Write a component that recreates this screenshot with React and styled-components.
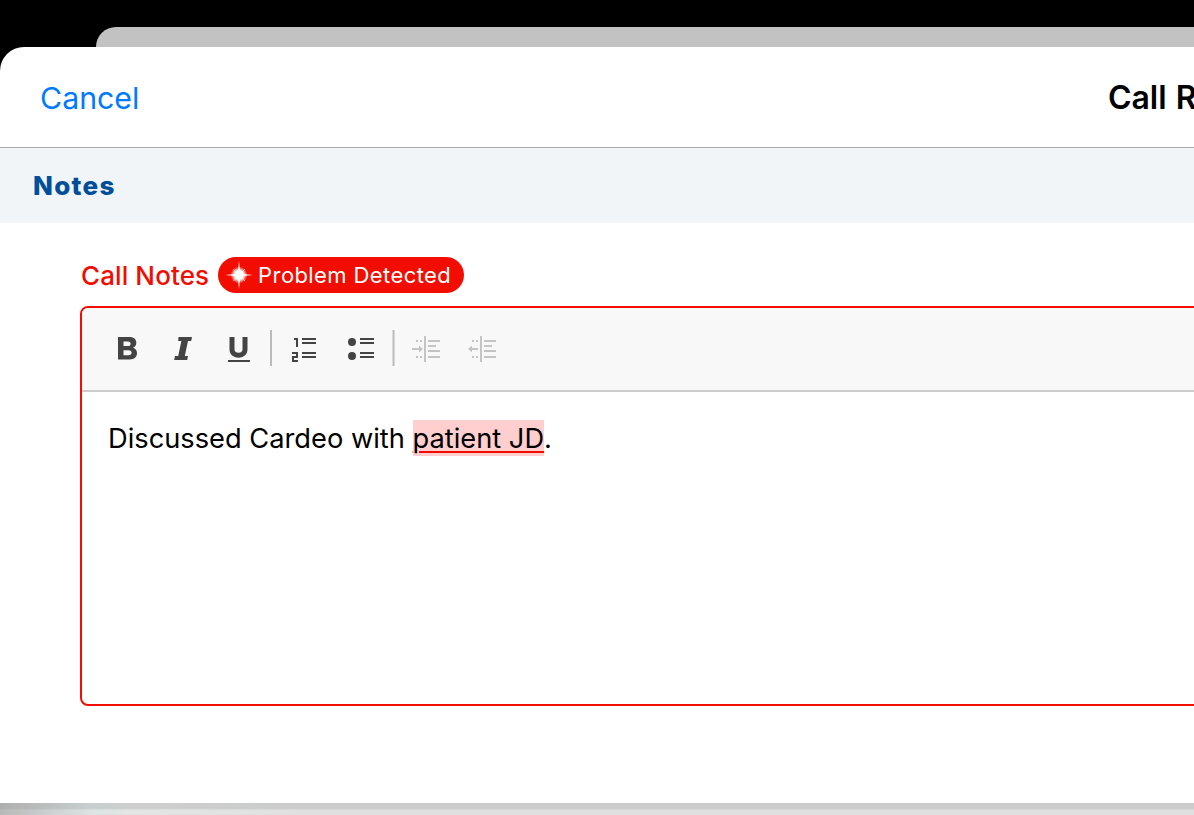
import React from "react";
import styled, { createGlobalStyle } from "styled-components";

const Global = createGlobalStyle`
  html, body { margin: 0; padding: 0; background: #000; }
  body { font-family: Inter, "Noto Sans", "Liberation Sans", sans-serif; }
`;
const Stage = styled.div`
  width: 1194px; height: 815px; overflow: hidden; background: #000;
  display: flex; flex-direction: column; padding-top: 27px; box-sizing: border-box;
`;
const BackCard = styled.div`
  flex: 0 0 20px; margin-left: 96px; background: #c2c2c2; border-radius: 20px 0 0 0;
`;
const Sheet = styled.div`
  flex: 0 0 756px; width: 2386px; background: #fff; border-radius: 24px 0 0 0;
  display: flex; flex-direction: column; overflow: hidden;
`;
const BottomStrip = styled.div`
  flex: 1;
  background:
    linear-gradient(180deg, rgba(150,150,150,.28) 0, rgba(150,150,150,.28) 45%, rgba(150,150,150,0) 60%),
    linear-gradient(90deg, #b8b8b8 0, #dbe4e3 90px, #e2e5e4 130px, #e0e0e0 300px, #e0e0e0 100%);
`;
const Header = styled.header`
  height: 101px; box-sizing: border-box; border-bottom: 1px solid #ababab; padding: 1px 40px 0 41px;
  display: grid; grid-template-columns: 1fr auto 1fr; align-items: center;
`;
const Cancel = styled.button`
  justify-self: start; border: 0; background: none; padding: 0; color: #007aff;
  font: 400 30.300px Inter, sans-serif; margin-left: -1px;
`;
const Title = styled.h1`
  margin: 0 0 1px; font: 600 32px Inter, sans-serif; color: #000; white-space: nowrap; word-spacing: 1px;
`;
const SectionBar = styled.div`
  height: 75px; background: #f1f5f8; display: flex; align-items: center; padding-left: 33px;
  color: #004f98; font-size: 26px; font-weight: 800; letter-spacing: 1.300px; box-sizing: border-box;
`;
const Body = styled.div`
  padding: 34px 0 0 80px; display: flex; flex-direction: column;
`;
const LabelRow = styled.div`
  height: 36px; display: flex; align-items: center; gap: 9px; margin-bottom: 13px;
`;
const Label = styled.label`
  color: #f20d00; font-size: 26px; font-weight: 500; margin-left: 1px; letter-spacing: .1px;
`;
const Badge = styled.span`
  height: 36px; width: 246px; box-sizing: border-box; border-radius: 18px; background: #f20d00;
  color: #fff; font-size: 22px; font-weight: 400; letter-spacing: .4px;
  display: flex; align-items: center; gap: 4px; padding-left: 6px;
`;
const Editor = styled.div`
  width: 1400px; height: 400px; box-sizing: border-box; border: 2px solid #f20d00; border-radius: 8px;
  overflow: hidden; display: flex; flex-direction: column;
`;
const Toolbar = styled.div`
  height: 84px; flex: none; box-sizing: border-box; background: #f8f8f8; border-bottom: 2px solid #ccc;
  display: flex; align-items: flex-start;
`;
const ToolIcon = styled.svg`
  display: block; flex: none;
`;
const Content = styled.div`
  padding: 28px 0 0 26px; font-size: 27.250px; line-height: 38px; color: #000; white-space: nowrap;
`;
const Flagged = styled.span`
  display: inline-block; height: 36px; background: #ffcfcf;
  text-decoration: underline #f20d00 2px; text-underline-offset: 3px;
`;

const Ink = "#444";
const Dim = "#c4c4c4";

const Spark = () => (
  <svg width="30" height="30" viewBox="0 0 30 30">
    <defs>
      <radialGradient id="g">
        <stop offset="0" stopColor="#fff" />
        <stop offset=".5" stopColor="#fff" />
        <stop offset="1" stopColor="#fff" stopOpacity="0" />
      </radialGradient>
    </defs>
    <circle cx="15" cy="15" r="8.500" fill="url(#g)" />
    <path d="M15 1 L16.300 13.700 L29 15 L16.300 16.300 L15 29 L13.700 16.300 L1 15 L13.700 13.700 Z" fill="#fff" />
    <path d="M15 15 L21 9 M15 15 L21 21 M15 15 L9 21 M15 15 L9 9" stroke="#fff" strokeWidth="1" opacity=".7" />
  </svg>
);

const ToolbarIcons = () => (
  <ToolIcon width="430" height="82" viewBox="0 0 430 82">
    <g transform="translate(-82 -308)">
      <path fill={Ink} fillRule="evenodd" d="M118 337h11.500c4.500 0 6.800 2.400 6.800 5.800 0 2.500-1.300 4.200-3.300 5 2.500.7 4 2.600 4 5.300 0 3.900-2.700 6.400-7.300 6.400H118ZM123.500 341.500v4.500h4.500c1.600 0 2.600-.8 2.600-2.300s-1-2.200-2.600-2.200ZM123.500 350.300v5h5.200c1.800 0 2.900-.9 2.900-2.500s-1.100-2.500-2.900-2.500Z" />
      <path fill={Ink} d="M178.500 337h13.500l-.8 4h-3.200l-3.200 15h3.200l-.8 4h-13l.8-4h3.200l3.200-15h-3.200Z" />
      <path fill="none" stroke={Ink} d="M232 337v12.500c0 7.500 13 7.500 13 0V337" strokeWidth="5" />
      <rect x="228" y="360" width="22" height="2" fill={Ink} />
      <rect x="270" y="330" width="2" height="36" fill="#bbb" />
      <g fill={Ink}>
        <path d="M294 338h4v9h-2v-7h-2Z" />
        <path d="M292 352h6v6h-4v2h4v2h-6v-6h4v-2h-4Z" />
        <rect x="302" y="338" width="14" height="2" /><rect x="302" y="342" width="14" height="2" />
        <rect x="302" y="352" width="14" height="2" /><rect x="302" y="356" width="14" height="2" />
        <circle cx="352" cy="342" r="4" /><circle cx="352" cy="356" r="4" />
        <rect x="360" y="338" width="14" height="2" /><rect x="360" y="342" width="14" height="2" />
        <rect x="360" y="352" width="14" height="2" /><rect x="360" y="356" width="14" height="2" />
      </g>
      <rect x="392.500" y="330" width="2" height="36" fill="#bbb" />
      <g fill={Dim}>
        <path d="M412 348h7v-2.500l4 3.500-4 3.500V350h-7Z" />
        <rect x="424" y="336" width="2" height="26" />
        <rect x="428" y="340" width="12" height="2" /><rect x="428" y="345" width="8" height="2" />
        <rect x="428" y="350" width="12" height="2" /><rect x="428" y="356" width="12" height="2" />
        <rect x="416" y="340" width="2" height="2" /><rect x="420" y="340" width="2" height="2" />
        <rect x="416" y="356" width="2" height="2" /><rect x="420" y="356" width="2" height="2" />
        <path d="M478 348h-6v-2.500l-4 3.500 4 3.500V350h6Z" />
        <rect x="480" y="336" width="2" height="26" />
        <rect x="484" y="340" width="12" height="2" /><rect x="484" y="345" width="8" height="2" />
        <rect x="484" y="350" width="12" height="2" /><rect x="484" y="356" width="12" height="2" />
        <rect x="472" y="340" width="2" height="2" /><rect x="476" y="340" width="2" height="2" />
        <rect x="472" y="356" width="2" height="2" /><rect x="476" y="356" width="2" height="2" />
      </g>
    </g>
  </ToolIcon>
);

export default function App() {
  return (
    <Stage>
      <Global />
      <BackCard />
      <Sheet>
        <Header>
          <Cancel>Cancel</Cancel>
          <Title>Call Report</Title>
          <span />
        </Header>
        <SectionBar>Notes</SectionBar>
        <Body>
          <LabelRow>
            <Label>Call Notes</Label>
            <Badge><Spark />Problem Detected</Badge>
          </LabelRow>
          <Editor>
            <Toolbar><ToolbarIcons /></Toolbar>
            <Content>Discussed Cardeo with <Flagged>patient JD</Flagged>.</Content>
          </Editor>
        </Body>
      </Sheet>
      <BottomStrip />
    </Stage>
  );
}
